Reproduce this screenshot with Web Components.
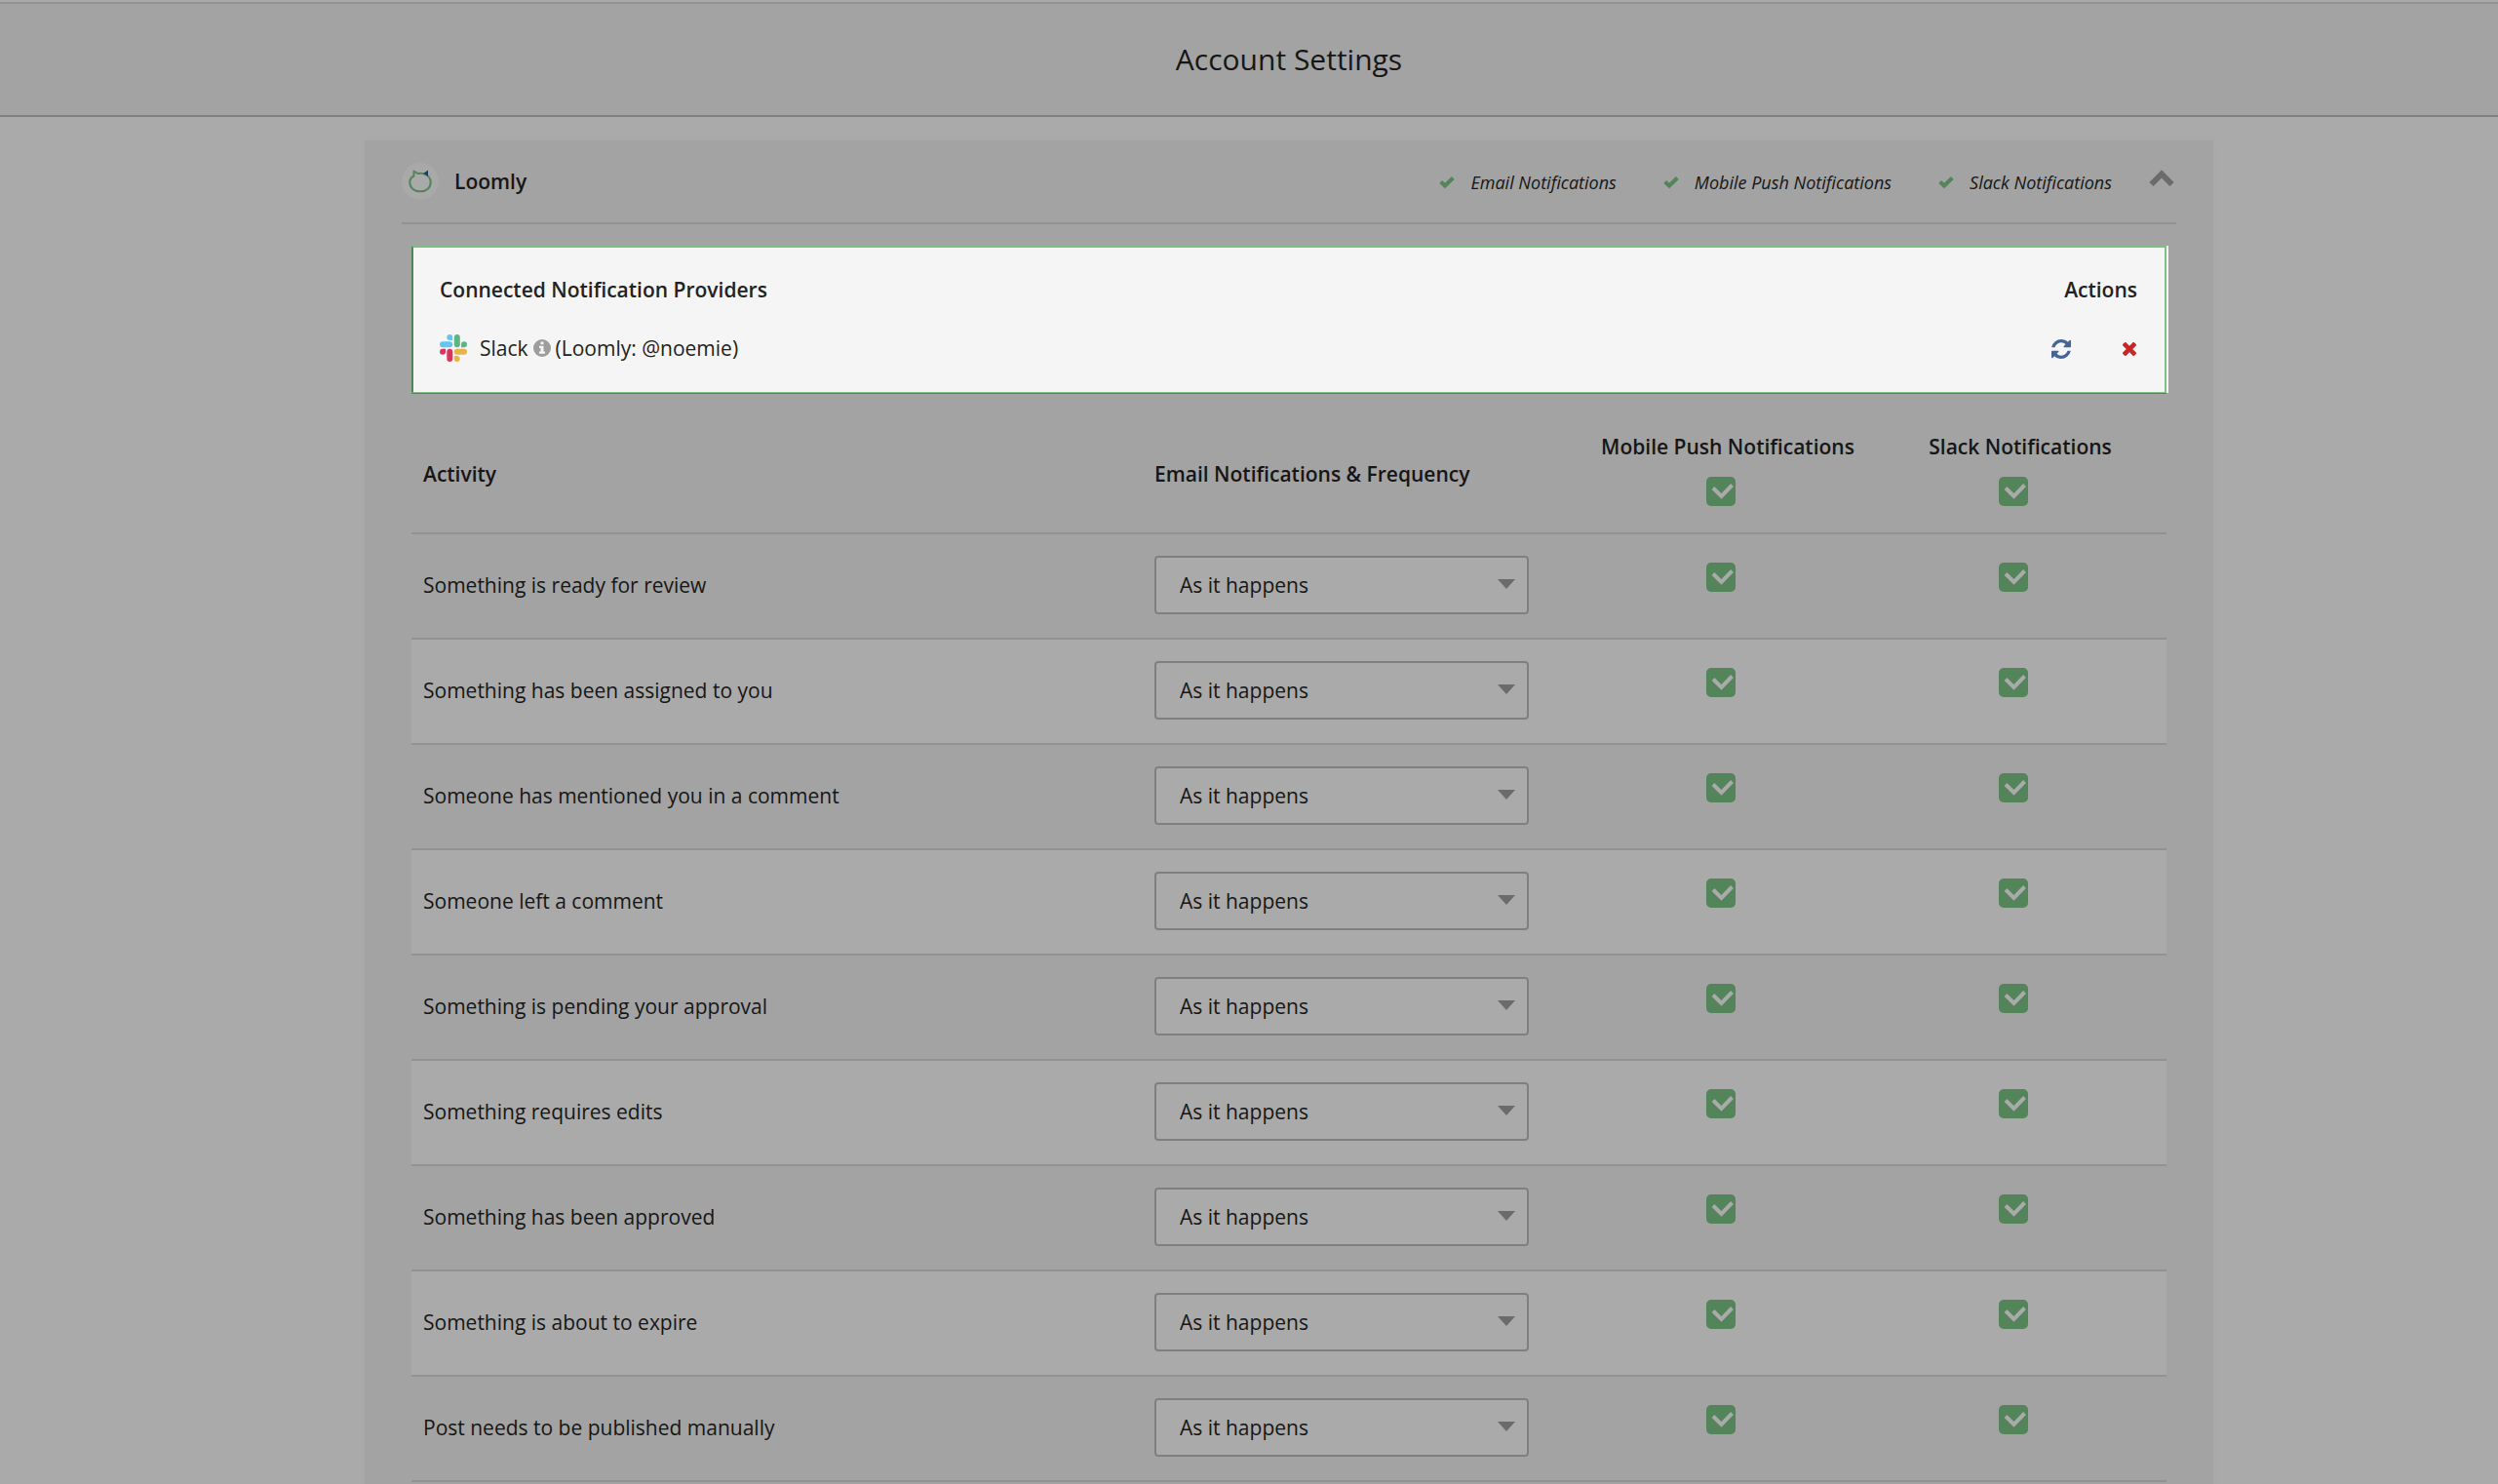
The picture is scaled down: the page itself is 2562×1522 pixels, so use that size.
<!DOCTYPE html>
<html lang="en">
<head>
<meta charset="utf-8">
<title>Account Settings</title>
<style>
    body {
        margin: 0;
        background-color: #aaaaaa;
        color: #161616;
        font-family: "Open Sans", sans-serif;
        font-size: 21px;
        line-height: 30px;
    }
</style>
</head>
<body>
<settings-page>
    <page-header slot="header">Account Settings</page-header>
    <calendar-card>
        <calendar-header slot="header" name="Loomly">
            <channel-status>Email Notifications</channel-status>
            <channel-status>Mobile Push Notifications</channel-status>
            <channel-status>Slack Notifications</channel-status>
        </calendar-header>
        <provider-box account="(Loomly: @noemie)">Slack</provider-box>
        <activity-table></activity-table>
    </calendar-card>
</settings-page>

<script>
class SettingsPage extends HTMLElement {

    constructor() {
        super();
        this.attachShadow({mode: 'open'});
    }

    connectedCallback() {
        this.shadowRoot.innerHTML = `
        <style>
        :host {
            display: block;
            height: 100vh;
            overflow: hidden;
        }

        main {
            padding: 24px 16px 0 98px;
        }
        </style>
            <slot name="header"></slot>
            <main><slot></slot></main>
        `;
    }
}

class PageHeader extends HTMLElement {

    constructor() {
        super();
        this.attachShadow({mode: 'open'});
    }

    connectedCallback() {
        this.shadowRoot.innerHTML = `
        <style>
        :host {
            display: block;
            padding-top: 2px;
        }

        header {
            padding: 37px 0 37px 82px;
            border-top: 2px solid #919198;
            border-bottom: 2px solid #7f7f7f;
            background-color: #a3a3a3;
            text-align: center;
        }

        h1 {
            margin: 0;
            font-size: 30px;
            font-weight: 400;
            line-height: 40px;
        }
        </style>
            <header><h1><slot></slot></h1></header>
        `;
    }
}

class CalendarCard extends HTMLElement {

    constructor() {
        super();
        this.attachShadow({mode: 'open'});
    }

    connectedCallback() {
        this.shadowRoot.innerHTML = `
        <style>
        :host {
            display: block;
            box-sizing: border-box;
            max-width: 1896px;
            margin: 0 auto;
            padding: 0 38px 40px;
            background-color: #a3a3a3;
            box-shadow: 0 0 4px #a6a6a6;
        }

        .content {
            padding: 22px 10px 0;
        }
        </style>
            <slot name="header"></slot>
            <div class="content"><slot></slot></div>
        `;
    }
}

class CalendarHeader extends HTMLElement {

    constructor() {
        super();
        this.attachShadow({mode: 'open'});
    }

    get name() {
        return this.getAttribute("name");
    }

    connectedCallback() {
        this.shadowRoot.innerHTML = `
        <style>
        :host {
            display: flex;
            align-items: center;
            height: 84px;
            border-bottom: 2px solid #929292;
        }

        .avatar {
            display: block;
            width: 38px;
            height: 38px;
            margin-right: 16px;
        }

        h2 {
            flex: 1;
            margin: 0;
            font-size: 21px;
            font-weight: 600;
            line-height: 30px;
        }

        .channels {
            display: flex;
            gap: 48px;
        }

        button {
            margin: 0 0 0 38px;
            padding: 0;
            border: none;
            background: none;
        }

        button svg {
            display: block;
        }
        </style>
            <svg class="avatar" viewBox="0 0 38 38">
                <circle cx="19" cy="19" r="19" fill="#a9a9a9"/>
                <path d="M12.500 13.500 L12.500 8.500 L16.500 11 Q19 10.400 22 11 C27 12.200 29.700 16 29.700 20 C29.700 25.500 25.500 29.300 19 29.300 C12.500 29.300 8.300 25.500 8.300 20 C8.300 17 9.500 15 12.500 13.500 Z" fill="none" stroke="#53845a" stroke-width="2" stroke-linejoin="round"/>
                <path d="M22 11 L27 7.500 L27 14 Q24.500 11.500 22 11 Z" fill="#1c3c63"/>
            </svg>
            <h2>${this.name}</h2>
            <div class="channels"><slot></slot></div>
            <button type="button" aria-label="Collapse">
                <svg width="28" height="28" viewBox="0 0 28 28">
                    <path d="M2.500 17 L13 6.500 L23.500 17" fill="none" stroke="#6b6b6b" stroke-width="6"/>
                </svg>
            </button>
        `;
    }
}

class ChannelStatus extends HTMLElement {

    constructor() {
        super();
        this.attachShadow({mode: 'open'});
    }

    connectedCallback() {
        this.shadowRoot.innerHTML = `
        <style>
        :host {
            display: flex;
            align-items: center;
            gap: 16px;
            padding-top: 2px;
            font-size: 18px;
            font-style: italic;
            line-height: 26px;
        }
        </style>
            <svg width="16" height="14" viewBox="0 0 16 14">
                <path d="M1.700 6.500 L6 10.500 L14.300 2.500" fill="none" stroke="#53845a" stroke-width="4"/>
            </svg>
            <span><slot></slot></span>
        `;
    }
}

class ProviderBox extends HTMLElement {

    constructor() {
        super();
        this.attachShadow({mode: 'open'});
    }

    get account() {
        return this.getAttribute("account");
    }

    connectedCallback() {
        this.shadowRoot.innerHTML = `
        <style>
        :host {
            display: block;
            box-sizing: border-box;
            padding: 28px 28px 30px 27px;
            border: 2px solid #7fbf84;
            border-left-color: #53845a;
            border-bottom: 1px solid #7fbf84;
            background-color: #f5f5f5;
            box-shadow: 0 1px #53845a, 2px 0 #f5f5f5;
            color: #222222;
        }

        .row {
            display: flex;
            align-items: center;
            justify-content: space-between;
        }

        .row + .row {
            margin-top: 30px;
        }

        h3 {
            margin: 0;
            font-size: 21px;
            font-weight: 600;
            line-height: 30px;
        }

        .provider, .actions {
            display: flex;
            align-items: center;
        }

        .logo {
            margin-right: 13px;
        }

        .info {
            margin: 0 5px;
        }

        .actions {
            gap: 53px;
            padding: 2px 1px 0 0;
        }

        button {
            padding: 0;
            border: none;
            background: none;
        }

        svg {
            display: block;
        }
        </style>
            <div class="row">
                <h3>Connected Notification Providers</h3>
                <h3>Actions</h3>
            </div>
            <div class="row">
                <div class="provider">
                    <svg class="logo" width="28" height="28" viewBox="0 0 28 28">
                        <g fill="#63c6ef">
                            <path d="M10.300 0 A3 3 0 0 0 10.300 6 L13.200 6 L13.200 3 A3 3 0 0 0 10.300 0 Z"/>
                            <rect x="0" y="7.300" width="13.200" height="6" rx="3"/>
                        </g>
                        <g fill="#5db583">
                            <rect x="14.800" y="0" width="6" height="13.200" rx="3"/>
                            <path d="M28 10.300 A3 3 0 0 0 22 10.300 L22 13.200 L25 13.200 A3 3 0 0 0 28 10.300 Z"/>
                        </g>
                        <g fill="#e6b54a">
                            <rect x="14.800" y="14.800" width="13.200" height="6" rx="3"/>
                            <path d="M17.700 28 A3 3 0 0 0 17.700 22 L14.800 22 L14.800 25 A3 3 0 0 0 17.700 28 Z"/>
                        </g>
                        <g fill="#d9365e">
                            <path d="M0 17.700 A3 3 0 0 0 6 17.700 L6 14.800 L3 14.800 A3 3 0 0 0 0 17.700 Z"/>
                            <rect x="7.300" y="14.800" width="6" height="13.200" rx="3"/>
                        </g>
                    </svg>
                    <span><slot></slot></span>
                    <svg class="info" width="18" height="18" viewBox="0 0 18 18">
                        <circle cx="9" cy="9" r="9" fill="#9d9d9d"/>
                        <path d="M7.500 2.500 H10.500 V5.200 H7.500 Z M6 6.800 H10.500 V12.500 H12 V14.800 H6 V12.500 H7.500 V9 H6 Z" fill="#f5f5f5"/>
                    </svg>
                    <span>${this.account}</span>
                </div>
                <div class="actions">
                    <button type="button" aria-label="Refresh">
                        <svg width="20" height="20" viewBox="0 0 1536 1536" fill="#466495">
                            <path d="M1511 928q0 5-1 7q-64 268-268 434.500T764 1536q-146 0-282.500-55T238 1324l-129 129q-19 19-45 19t-45-19t-19-45V960q0-26 19-45t45-19h448q26 0 45 19t19 45t-19 45l-137 137q71 66 161 102t187 36q134 0 250-65t186-179q11-17 53-117q8-23 30-23h192q13 0 22.500 9.500t9.500 22.500m25-800v448q0 26-19 45t-45 19h-448q-26 0-45-19t-19-45t19-45l138-138Q969 256 768 256q-134 0-250 65T332 500q-11 17-53 117q-8 23-30 23H50q-13 0-22.500-9.500T18 608v-7q65-268 270-434.500T768 0q146 0 284 55.500T1297 212l130-129q19-19 45-19t45 19t19 45"/>
                        </svg>
                    </button>
                    <button type="button" aria-label="Remove">
                        <svg width="14" height="14" viewBox="0 0 14 14">
                            <path d="M2.800 2.800 L11.200 11.200 M11.200 2.800 L2.800 11.200" stroke="#c62828" stroke-width="4.600" stroke-linecap="square"/>
                        </svg>
                    </button>
                </div>
            </div>
        `;
    }
}

class FrequencySelect extends HTMLElement {

    constructor() {
        super();
        this.attachShadow({mode: 'open'});
    }

    get label() {
        return this.getAttribute("label");
    }

    connectedCallback() {
        this.shadowRoot.innerHTML = `
        <style>
        :host {
            display: grid;
            align-items: center;
            max-width: 384px;
        }

        select, svg {
            grid-area: 1 / 1;
        }

        select {
            appearance: none;
            box-sizing: border-box;
            width: 100%;
            height: 60px;
            margin: 0;
            padding: 0 48px 0 24px;
            border: 2px solid #7f7f7f;
            border-radius: 4px;
            background-color: #aaaaaa;
            color: inherit;
            font: inherit;
        }

        svg {
            justify-self: end;
            margin: 0 14px 2px 0;
            pointer-events: none;
        }
        </style>
            <select aria-label="${this.label}">
                <option>As it happens</option>
            </select>
            <svg width="18" height="10" viewBox="0 0 18 10">
                <path d="M0 0 H18 L9 10 Z" fill="#6b6b6b"/>
            </svg>
        `;
    }
}

class GreenCheckbox extends HTMLElement {

    constructor() {
        super();
        this.attachShadow({mode: 'open'});
    }

    get label() {
        return this.getAttribute("label");
    }

    connectedCallback() {
        this.shadowRoot.innerHTML = `
        <style>
        :host {
            display: grid;
            justify-content: center;
            padding-right: 14px;
        }

        input, svg {
            grid-area: 1 / 1;
        }

        input {
            appearance: none;
            width: 30px;
            height: 30px;
            margin: 0;
            border-radius: 5px;
            background-color: #53845a;
        }

        svg {
            pointer-events: none;
        }
        </style>
            <input type="checkbox" checked aria-label="${this.label}">
            <svg width="30" height="30" viewBox="0 0 30 30">
                <path d="M7 11.500 L15.500 20 L26.500 8.500" fill="none" stroke="#aaaaaa" stroke-width="4"/>
            </svg>
        `;
    }
}

class ActivityTable extends HTMLElement {

    constructor() {
        super();
        this.attachShadow({mode: 'open'});
        this.activities = [
            'Something is ready for review',
            'Something has been assigned to you',
            'Someone has mentioned you in a comment',
            'Someone left a comment',
            'Something is pending your approval',
            'Something requires edits',
            'Something has been approved',
            'Something is about to expire',
            'Post needs to be published manually'
        ];
    }

    connectedCallback() {
        this.render();
    }

    renderRow(activity) {
        return `
            <tr>
                <td>${activity}</td>
                <td><frequency-select label="${activity}"></frequency-select></td>
                <td class="check"><green-checkbox label="Mobile push: ${activity}"></green-checkbox></td>
                <td class="check"><green-checkbox label="Slack: ${activity}"></green-checkbox></td>
            </tr>
        `;
    }

    render() {
        this.shadowRoot.innerHTML = `
        <style>
        :host {
            display: block;
            margin-top: 28px;
        }

        table {
            width: 100%;
            table-layout: fixed;
            border-collapse: separate;
            border-spacing: 0;
        }

        .activity {
            width: 750px;
        }

        .frequency {
            width: 450px;
        }

        th, td {
            padding: 22px 12px 24px;
            border-bottom: 2px solid #929292;
            text-align: left;
            vertical-align: middle;
        }

        th {
            padding: 12px 12px 17px;
            font-weight: 600;
        }

        .check {
            padding-left: 0;
            padding-right: 0;
            text-align: center;
        }

        th.check {
            padding-bottom: 27px;
        }

        td.check {
            padding-top: 29px;
            vertical-align: top;
        }

        th green-checkbox {
            margin-top: 16px;
        }

        tbody tr:nth-child(even) {
            background-color: #aaaaaa;
        }
        </style>
            <table>
                <colgroup>
                    <col class="activity">
                    <col class="frequency">
                    <col>
                    <col>
                </colgroup>
                <thead>
                    <tr>
                        <th>Activity</th>
                        <th>Email Notifications &amp; Frequency</th>
                        <th class="check">Mobile Push Notifications<green-checkbox label="All mobile push notifications"></green-checkbox></th>
                        <th class="check">Slack Notifications<green-checkbox label="All Slack notifications"></green-checkbox></th>
                    </tr>
                </thead>
                <tbody>${this.activities.map(activity => this.renderRow(activity)).join('')}</tbody>
            </table>
        `;
    }
}

window.customElements.define('settings-page', SettingsPage);
window.customElements.define('page-header', PageHeader);
window.customElements.define('calendar-card', CalendarCard);
window.customElements.define('calendar-header', CalendarHeader);
window.customElements.define('channel-status', ChannelStatus);
window.customElements.define('provider-box', ProviderBox);
window.customElements.define('frequency-select', FrequencySelect);
window.customElements.define('green-checkbox', GreenCheckbox);
window.customElements.define('activity-table', ActivityTable);
</script>
</body>
</html>
